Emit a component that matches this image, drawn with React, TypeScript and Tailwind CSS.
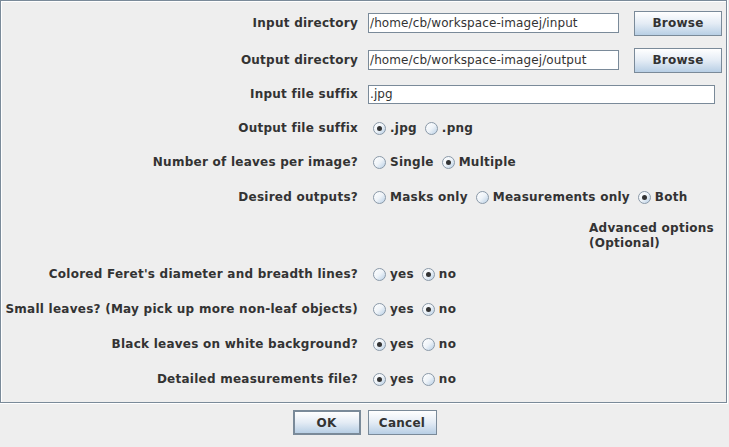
import React from 'react';

const Radio: React.FC<{ checked?: boolean; label: string }> = ({ checked, label }) => (
  <div className="flex items-center gap-[4px]">
    <span className="flex h-[13px] w-[13px] items-center justify-center rounded-full border border-[#8a99a8] bg-linear-to-br from-white via-[#eef3f8] to-[#b8cfe5]">
      {checked && <span className="h-[5px] w-[5px] rounded-full bg-[#333333]" />}
    </span>
    <span className="font-bold">{label}</span>
  </div>
);

const Row: React.FC<{ label?: string; className?: string; children?: React.ReactNode }> = ({ label, className, children }) => (
  <div className={`flex h-[34px] items-center ${className ?? ''}`}>
    <div className="w-[357px] shrink-0 text-right font-bold">{label}</div>
    {children}
  </div>
);

const RadioGroup: React.FC<{ options: string[]; selected: number }> = ({ options, selected }) => (
  <div className="ml-[15px] flex items-center gap-[8px]">
    {options.map((o, i) => (
      <Radio key={o} label={o} checked={i === selected} />
    ))}
  </div>
);

const Button: React.FC<{ label: string; className?: string }> = ({ label, className }) => (
  <button
    className={`flex h-[25px] items-center justify-center bg-linear-to-b from-white via-[#e4ecf5] to-[#b8cfe5] font-bold text-[#333333] ${className ?? ''}`}
  >
    {label}
  </button>
);

const Field: React.FC<{ value: string; className?: string }> = ({ value, className }) => (
  <div className={`flex items-center border border-[#7a8a99] bg-white px-[1px] font-normal tracking-[0.1px] text-[#333333] ${className ?? ''}`}>
    {value}
  </div>
);

export default function App() {
  return (
    <div className="h-[447px] w-[729px] bg-[#eeeeee] font-['DejaVu_Sans',sans-serif] text-[12px] tracking-[0.25px] text-[#333333]">
      <div className="w-[728px] border-r border-b border-white">
        <div className="flex flex-col border border-[#7a8a99] pt-[5px] pb-[6px] shadow-[inset_1px_1px_0_white]">
          <Row label="Input directory">
            <Field value="/home/cb/workspace-imagej/input" className="ml-[10px] h-[20px] w-[251px]" />
            <Button label="Browse" className="ml-[15px] w-[88px] border border-[#7a8a99]" />
          </Row>
          <Row label="Output directory" className="mt-[3px]">
            <Field value="/home/cb/workspace-imagej/output" className="ml-[10px] h-[20px] w-[251px]" />
            <Button label="Browse" className="ml-[15px] w-[88px] border border-[#7a8a99]" />
          </Row>
          <Row label="Input file suffix">
            <Field value=".jpg" className="ml-[10px] h-[19px] w-[347px]" />
          </Row>
          <Row label="Output file suffix">
            <RadioGroup options={['.jpg', '.png']} selected={0} />
          </Row>
          <Row label="Number of leaves per image?">
            <RadioGroup options={['Single', 'Multiple']} selected={1} />
          </Row>
          <Row label="Desired outputs?" className="mt-px">
            <RadioGroup options={['Masks only', 'Measurements only', 'Both']} selected={2} />
          </Row>
          <div className="mt-[5px] flex h-[34px] flex-col justify-center pl-[588px] font-bold leading-[15px]">
            <span>Advanced options</span>
            <span>(Optional)</span>
          </div>
          <Row label="Colored Feret's diameter and breadth lines?" className="mt-[4px]">
            <RadioGroup options={['yes', 'no']} selected={1} />
          </Row>
          <Row label="Small leaves? (May pick up more non-leaf objects)" className="mt-px">
            <RadioGroup options={['yes', 'no']} selected={1} />
          </Row>
          <Row label="Black leaves on white background?" className="mt-px">
            <RadioGroup options={['yes', 'no']} selected={0} />
          </Row>
          <Row label="Detailed measurements file?" className="mt-px">
            <RadioGroup options={['yes', 'no']} selected={0} />
          </Row>
        </div>
      </div>
      <div className="mt-[6px] flex justify-center gap-[7px]">
        <Button label="OK" className="w-[68px] border-2 border-[#7a8a99]" />
        <Button label="Cancel" className="w-[69px] border border-[#7a8a99]" />
      </div>
    </div>
  );
}
